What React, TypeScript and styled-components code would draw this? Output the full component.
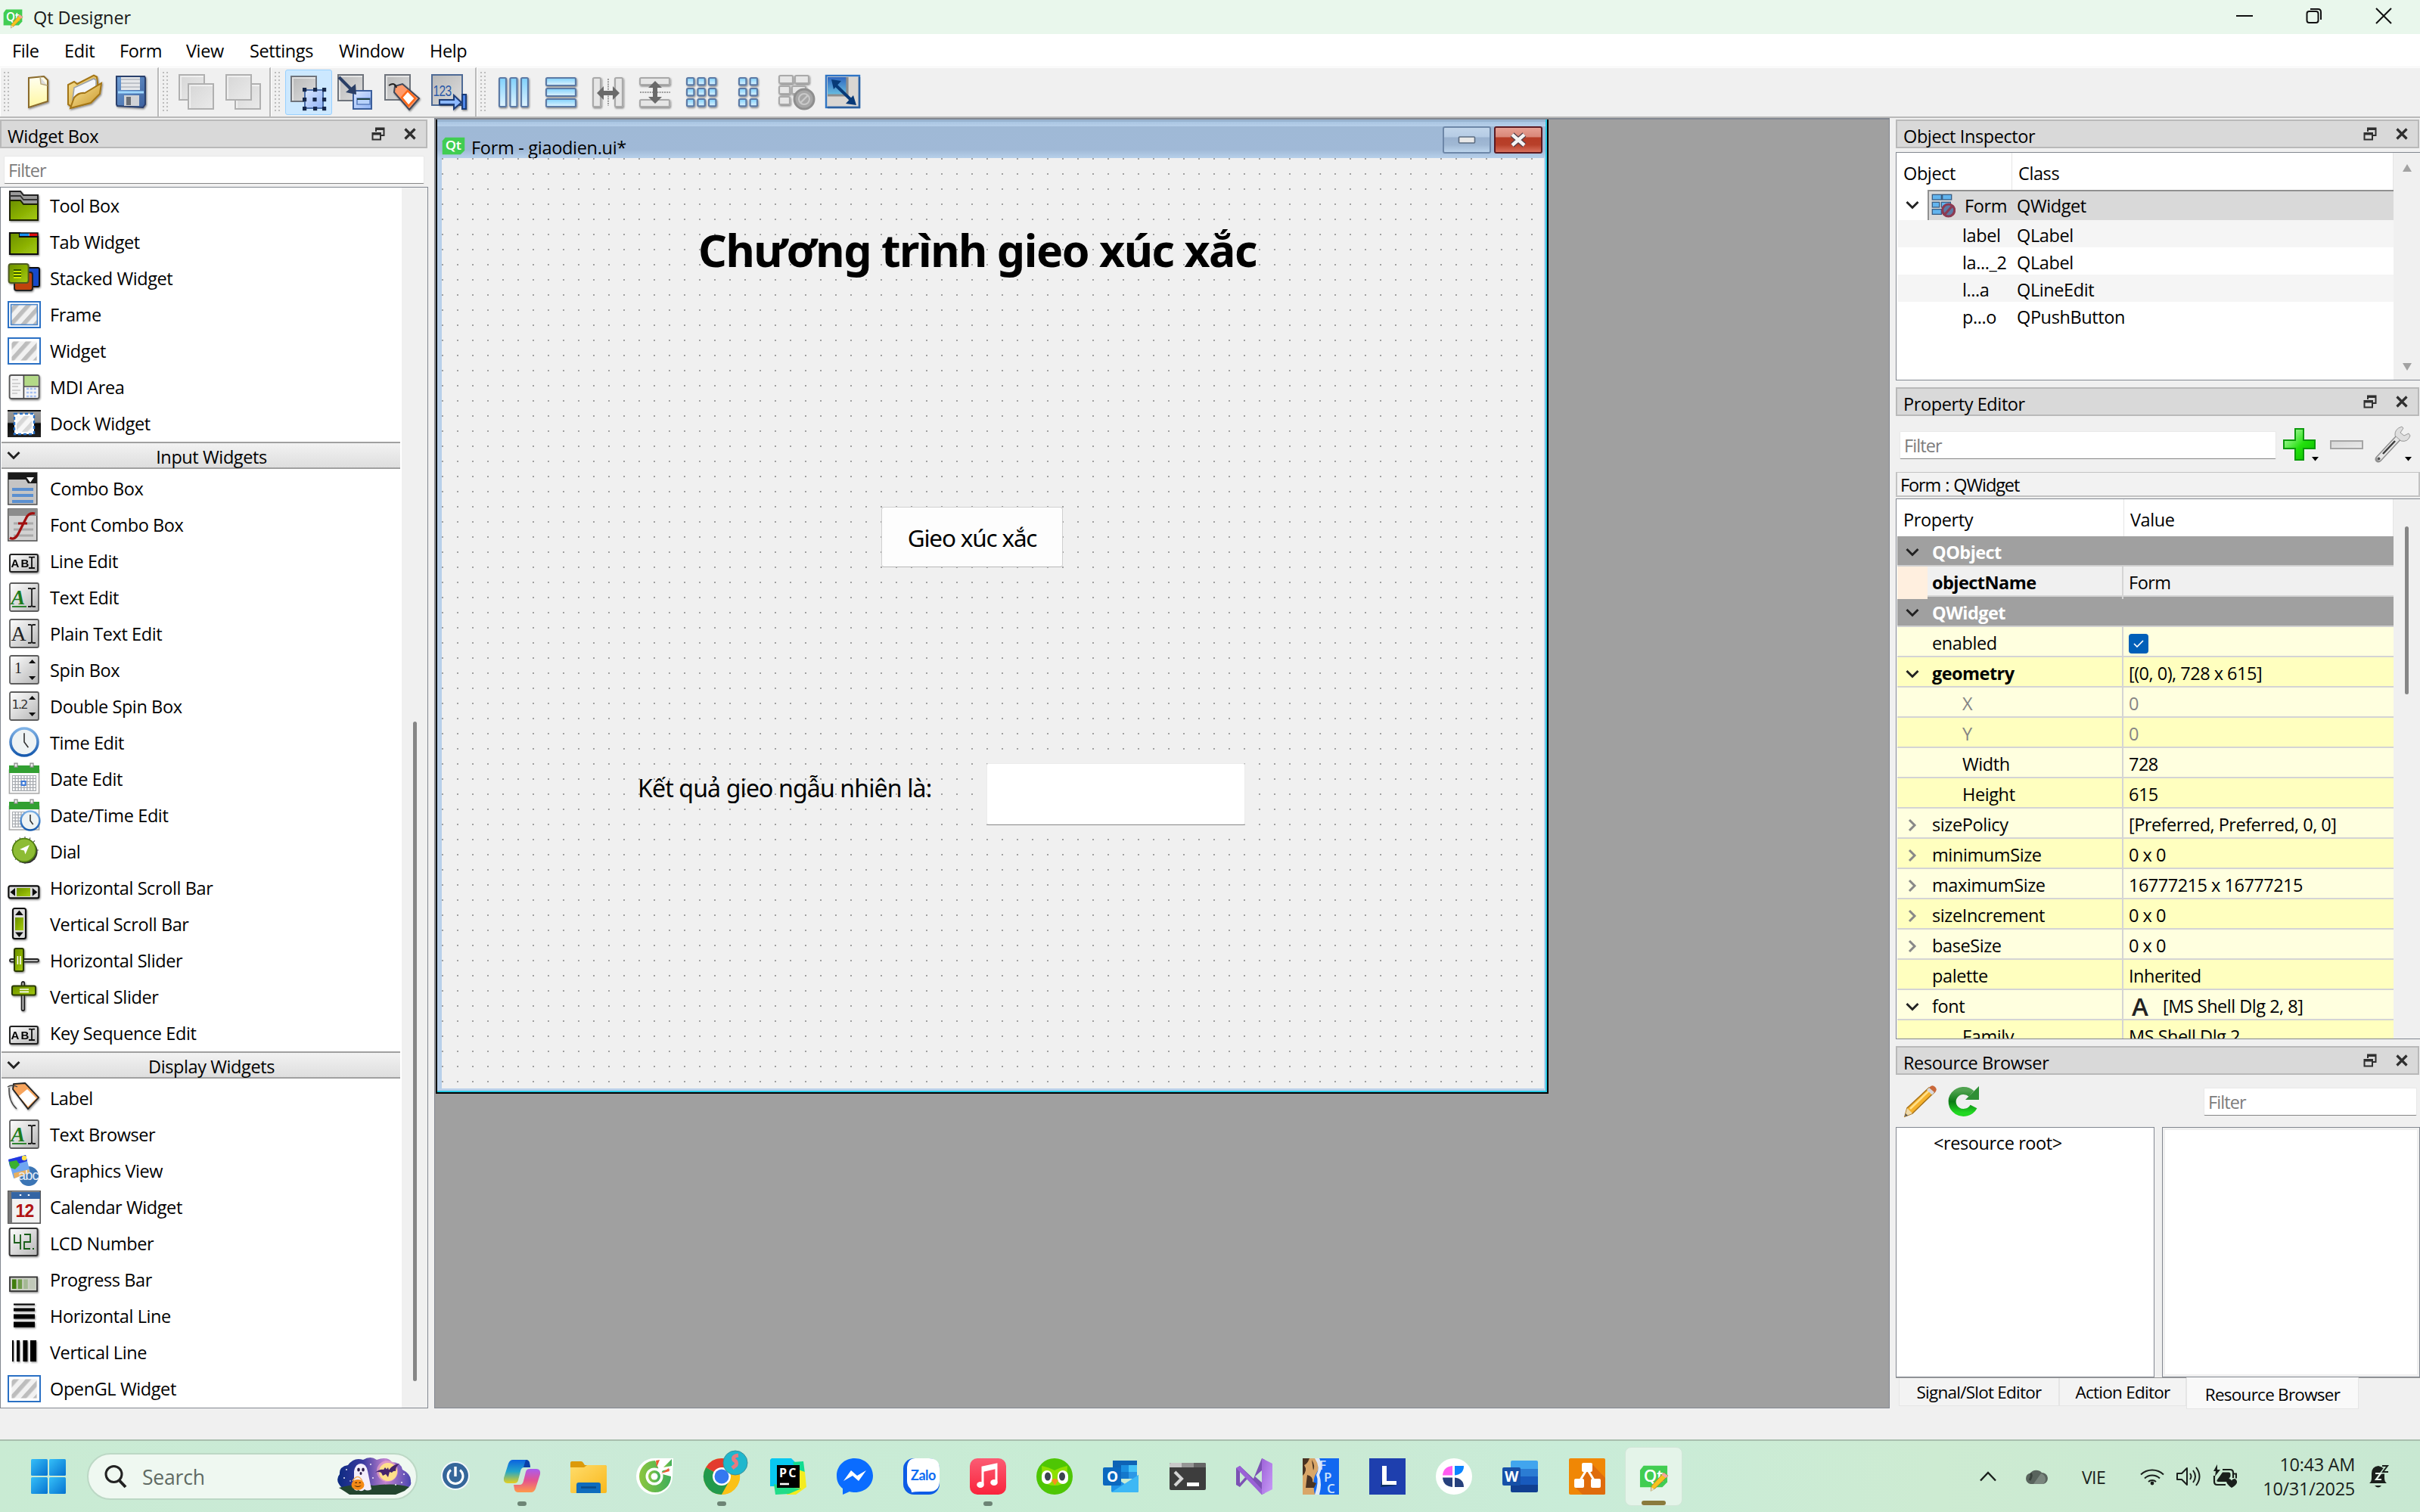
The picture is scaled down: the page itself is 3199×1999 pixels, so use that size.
import React from "react";
import styled, { createGlobalStyle, css } from "styled-components";

const UI = '"Open Sans", "Noto Sans", sans-serif';
const FORM_FONT = '"Noto Sans", "Open Sans", sans-serif';

const GlobalStyle = createGlobalStyle`
  * { box-sizing: border-box; }
  body { margin: 0; background: #f0f0f0; overflow: hidden; }
`;

/* ---------- shell ---------- */

const Desktop = styled.div`
  width: 3199px;
  height: 1999px;
  display: flex;
  flex-direction: column;
  background: #f0f0f0;
  font-family: ${UI};
  font-size: 23.5px;
  letter-spacing: -0.4px;
  line-height: 1;
  color: #000;
  white-space: nowrap;
`;

const TitleBar = styled.header`
  height: 45px;
  flex: none;
  display: flex;
  align-items: center;
  padding: 0 2px 0 4px;
  background: #e9f7ec;
`;

const AppTitle = styled.span`
  flex: 1;
  padding-left: 14px;
  line-height: 46px;
  letter-spacing: -0.1px;
  color: #191919;
`;

const CaptionButton = styled.span`
  width: 92px;
  height: 45px;
  padding-bottom: 3px;
  display: flex;
  align-items: center;
  justify-content: center;
`;

const MenuBar = styled.nav`
  height: 44px;
  flex: none;
  display: flex;
  gap: 35px;
  padding: 1px 0 0 16px;
  line-height: 43px;
  background: #fff;
  border-bottom: 1px solid #f5f5f5;
`;

const MenuItem = styled.span<{ $w: number }>`
  width: ${(p) => p.$w}px;
`;

const ToolbarRow = styled.div`
  height: 67px;
  flex: none;
  display: flex;
  border-bottom: 2px solid #b9b9b9;
`;

const ToolGroup = styled.div<{ $last?: boolean }>`
  display: flex;
  align-items: center;
  padding-right: 3px;
  border-top: 1px solid #fff;
  border-left: 1px solid #fff;
  ${(p) => (p.$last ? "flex: 1;" : "border-right: 2px solid #b9b9b9;")}
`;

const Grip = styled.span`
  width: 8px;
  height: 54px;
  margin: 0 6px 0 4px;
  background-image: linear-gradient(to right, transparent 2px, #f0f0f0 2px),
    linear-gradient(to bottom, #bdbdbd 2px, #f0f0f0 2px);
  background-size: 5px 5px;
`;

const ToolButton = styled.span<{ $active?: boolean }>`
  width: 62px;
  height: 60px;
  display: flex;
  align-items: center;
  justify-content: center;
  border-radius: 3px;
  ${(p) =>
    p.$active &&
    css`
      background: #cce8ff;
      border: 1px solid #99d1ff;
    `}
`;

const Workspace = styled.main`
  flex: 1;
  min-height: 0;
  display: flex;
  padding-top: 2px;
  padding-bottom: 41px;
`;

/* ---------- docks ---------- */

const LeftDock = styled.section`
  width: 566px;
  flex: none;
  display: flex;
  flex-direction: column;
`;

const RightDock = styled.section`
  width: 693px;
  flex: none;
  margin-left: 8px;
  display: flex;
  flex-direction: column;
`;

const DockTitle = styled.div<{ $mt?: number }>`
  height: 38px;
  flex: none;
  margin-top: ${(p) => p.$mt ?? 0}px;
  margin-right: 1px;
  display: flex;
  align-items: center;
  padding: 6px 13px 0 8px;
  background: #d9d9d9;
  border: 2px solid #b9b9b9;
`;

const DockName = styled.span`
  flex: 1;
  line-height: 34px;
`;

const DockButtons = styled.span`
  display: flex;
  align-items: center;
  gap: 25px;
  margin-top: -6px;
`;

const FilterField = styled.div<{ $w: number }>`
  width: ${(p) => p.$w}px;
  height: 37px;
  flex: none;
  padding: 0 5px;
  line-height: 36px;
  letter-spacing: -0.9px;
  color: #7d7d7d;
  background: #fff;
  border: 1px solid #e8e8e8;
  border-bottom: 1px solid #868686;
  border-radius: 2px;
`;

const LeftFilterWrap = styled.div`
  padding: 10px 0 4px 5px;
`;

const WidgetFrame = styled.div`
  flex: 1;
  min-height: 0;
  display: flex;
  border: 1px solid #828790;
  background: #fff;
  overflow: hidden;
`;

const WidgetList = styled.div`
  width: 530px;
  flex: none;
`;

const WidgetRow = styled.div`
  height: 48px;
  display: flex;
  align-items: center;
  gap: 12px;
  padding-left: 9px;
`;

const WidgetName = styled.span`
  line-height: 40px;
`;

const Category = styled.div`
  height: 36px;
  margin: 0 2px 2px 1px;
  display: flex;
  align-items: center;
  padding: 0 22px 0 7px;
  border-top: 2px solid #a0a0a0;
  border-bottom: 2px solid #a0a0a0;
  background: linear-gradient(#f2f2f2, #dedede);
`;

const CategoryName = styled.span`
  flex: 1;
  text-align: center;
  padding: 5px 0 0 25px;
`;

const ScrollTrack = styled.div`
  flex: 1;
  display: flex;
  flex-direction: column;
  align-items: center;
  background: #f0f0f0;
`;

const Thumb = styled.div<{ $top: number; $h: number }>`
  width: 5px;
  height: ${(p) => p.$h}px;
  margin-top: ${(p) => p.$top}px;
  border-radius: 3px;
  background: #868686;
`;

/* ---------- MDI area ---------- */

const MdiArea = styled.section`
  width: 1924px;
  height: 1706px;
  margin: -2px 0 0 8px;
  flex: none;
  border: 1px solid #828790;
  border-top: 2px solid #828790;
  background: #a0a0a0;
`;

const FormWindow = styled.div`
  width: 1471px;
  height: 1288px;
  margin-left: 1px;
  display: flex;
  flex-direction: column;
  background: #b8d0ea;
  border: 1px solid #000;
  border-width: 0 2px 2px 2px;
`;

const FormInner = styled.div`
  flex: 1;
  display: flex;
  flex-direction: column;
  border: 0 solid #27c8e3;
  border-width: 0 2px 2px 0;
`;

const FormTitle = styled.div`
  height: 51px;
  flex: none;
  display: flex;
  align-items: flex-start;
  padding: 0 4px 0 6px;
  background: linear-gradient(#99b4d1 0, #99b4d1 3px, #a9c5e2 3px, #b7cfe9 9px, #9fb9d6 9px, #a0b9d7 40px, #b7d0ea 51px);
`;

const FormCaption = styled.span`
  flex: 1;
  padding: 18px 0 0 8px;
  line-height: 38px;
  letter-spacing: -0.3px;
`;

const GlyphSlot = styled.span`
  margin-top: 23px;
  display: flex;
`;

const WinButton = styled.span<{ $close?: boolean }>`
  width: 64px;
  height: 36px;
  margin: 9px 0 0 4px;
  display: flex;
  align-items: center;
  justify-content: center;
  border-radius: 3px;
  ${(p) =>
    p.$close
      ? css`
          border: 2px solid #5b1a22;
          background: linear-gradient(#e6a094, #d98677 38%, #b63c26 40%, #b8402a 70%, #d8705c);
        `
      : css`
          border: 2px solid #6d87a8;
          background: linear-gradient(#c1d5ea, #b5cbe4 38%, #9ab2cf 40%, #a0b8d4 70%, #bcd4ec);
        `}
`;

const FormCanvas = styled.div`
  position: relative;
  width: 1457px;
  height: 1230px;
  margin-left: 6px;
  background-color: #f0f0f0;
  background-image: linear-gradient(to right, transparent 2px, #f0f0f0 2px),
    linear-gradient(to bottom, #a0a0a0 2px, #f0f0f0 2px);
  background-size: 20px 20px;
  font-family: ${FORM_FONT};
`;

const Placed = styled.div<{ $x: number; $y: number; $w: number; $h: number }>`
  position: absolute;
  left: ${(p) => p.$x}px;
  top: ${(p) => p.$y}px;
  width: ${(p) => p.$w}px;
  height: ${(p) => p.$h}px;
`;

const Heading = styled(Placed)`
  font-size: 59px;
  font-weight: 700;
  line-height: 120px;
  letter-spacing: -1.45px;
`;

const FormLabel = styled(Placed)`
  font-size: 32px;
  line-height: 60px;
  letter-spacing: -0.85px;
`;

const PushButton = styled(Placed)`
  font-size: 31.5px;
  line-height: 80px;
  letter-spacing: -1.2px;
  text-align: center;
  background: #fdfdfd;
  border: 1px solid #d0d0d0;
  border-bottom-color: #b8b8b8;
  border-radius: 4px;
`;

const LineEdit = styled(Placed)`
  background: #fff;
  border: 1px solid #ececec;
  border-bottom: 1px solid #868686;
  border-radius: 3px;
`;

/* ---------- trees ---------- */

const TreeFrame = styled.div<{ $h: number; $mt: number }>`
  height: ${(p) => p.$h}px;
  flex: none;
  margin-top: ${(p) => p.$mt}px;
  display: flex;
  background: #fff;
  border: 1px solid #828790;
  border-right: 0;
  overflow: hidden;
`;

const TreeBody = styled.div`
  width: 657px;
  flex: none;
`;

const TreeHeader = styled.div<{ $h: number; $pt: number }>`
  height: ${(p) => p.$h}px;
  display: flex;
  line-height: ${(p) => p.$h - p.$pt}px;
  border-right: 1px solid #e5e5e5;
`;

const HeaderCell = styled.span<{ $w?: number; $pt: number }>`
  ${(p) => (p.$w ? `width: ${p.$w}px; border-right: 1px solid #e5e5e5; padding-left: 9px;` : "flex: 1; padding-left: 8px;")}
  padding-top: ${(p) => p.$pt}px;
`;

const ObjectRow = styled.div<{ $alt?: boolean; $root?: boolean }>`
  height: ${(p) => (p.$root ? 40 : 36)}px;
  display: grid;
  grid-template-columns: 40px 118px 1fr;
  align-items: stretch;
  margin-left: 1px;
  line-height: ${(p) => (p.$root ? 42 : 40)}px;
  background: ${(p) => (p.$alt ? "#f5f5f5" : "#fff")};
`;

const ExpandCell = styled.span`
  display: flex;
  align-items: center;
  justify-content: center;
`;

const ObjectName = styled.span<{ $root?: boolean }>`
  display: flex;
  align-items: center;
  gap: 12px;
  padding-left: ${(p) => (p.$root ? 3 : 46)}px;
  ${(p) => p.$root && "background: #d9d9d9; border: 2px solid #909090; border-width: 2px 0 0 2px; line-height: 38px;"}
`;

const ClassName = styled.span<{ $root?: boolean }>`
  ${(p) => p.$root && "background: #d9d9d9; border-top: 2px solid #909090; line-height: 38px;"}
`;

const ArrowTrack = styled(ScrollTrack)`
  justify-content: space-between;
  padding: 15px 0 12px;
`;

const PropTools = styled.div`
  height: 74px;
  flex: none;
  display: flex;
  align-items: center;
  padding: 2px 0 0 5px;
`;

const PropTool = styled.span<{ $w: number }>`
  width: ${(p) => p.$w}px;
  display: flex;
  justify-content: center;
`;

const ClassBox = styled.div`
  height: 33px;
  flex: none;
  padding: 1px 0 0 4px;
  line-height: 30px;
  letter-spacing: -1.1px;
  word-spacing: 1px;
  background: #f2f2f2;
  border: 2px solid #c3c3c3;
  border-top-width: 1px;
`;

const GroupRow = styled.div`
  height: 40px;
  display: grid;
  grid-template-columns: 40px 1fr;
  margin-left: 1px;
  line-height: 42px;
  font-weight: 700;
  letter-spacing: -0.55px;
  color: #fff;
  background: #a0a0a0;
  border-bottom: 2px solid #cfcfcf;
`;

const GroupName = styled.span`
  padding: 0 0 0 6px;
`;

type Tone = "light" | "deep" | "plain";
const toneColor: Record<Tone, string> = { light: "#ffffdf", deep: "#ffffbf", plain: "#f0f0f0" };

const PropRow = styled.div<{ $tone: Tone; $dim?: boolean }>`
  height: 40px;
  display: grid;
  grid-template-columns: 40px 259px 1fr;
  margin-left: 1px;
  line-height: 43px;
  color: ${(p) => (p.$dim ? "#858585" : "#000")};
  background: ${(p) => toneColor[p.$tone]};
  border-bottom: 2px solid #d4d4d4;
`;

const PropName = styled.span<{ $nested?: boolean; $bold?: boolean }>`
  padding-left: ${(p) => (p.$nested ? 46 : 6)}px;
  border-right: 2px solid #d4d4d4;
  ${(p) => p.$bold && "font-weight: 700; letter-spacing: -0.55px;"}
`;

const PropValue = styled.span`
  display: flex;
  align-items: center;
  padding-left: 7px;
  letter-spacing: -0.5px;
`;

const PropExpand = styled(ExpandCell)<{ $peach?: boolean }>`
  background: ${(p) => (p.$peach ? "#ffefdf" : "transparent")};
`;

const CheckBox = styled.span`
  width: 26px;
  height: 26px;
  display: flex;
  align-items: center;
  justify-content: center;
  border-radius: 4px;
  background: #005fb8;
`;

const FontGlyph = styled.span`
  width: 45px;
  padding-left: 4px;
  font-family: "Open Sans", sans-serif;
  font-weight: 600;
  font-size: 33px;
  line-height: 36px;
  color: #222;
`;

/* ---------- resource browser ---------- */

const ResourceTools = styled.div`
  height: 69px;
  flex: none;
  display: flex;
  align-items: center;
  justify-content: space-between;
  padding: 5px 4px 4px 10px;
`;

const ToolPair = styled.span`
  display: flex;
  gap: 14px;
`;

const ResourcePanes = styled.div`
  height: 332px;
  flex: none;
  display: flex;
  gap: 10px;
  border-bottom: 1px solid #9a9a9a;
`;

const ResourcePane = styled.div<{ $w?: number }>`
  ${(p) => (p.$w ? `width: ${p.$w}px;` : "flex: 1; box-shadow: inset 0 0 0 3px #f0f0f0;")}
  padding: 1px 0 0 49px;
  line-height: 38px;
  background: #fff;
  border: 1px solid #828790;
`;

const TabStrip = styled.div`
  display: flex;
  align-items: flex-start;
  padding-left: 4px;
  font-size: 22.5px;
  letter-spacing: -0.75px;
`;

const DockTab = styled.span<{ $w: number; $on?: boolean }>`
  width: ${(p) => p.$w}px;
  height: ${(p) => (p.$on ? 42 : 37)}px;
  margin-top: ${(p) => (p.$on ? -1 : 0)}px;
  line-height: ${(p) => (p.$on ? 46 : 38)}px;
  text-align: center;
  background: ${(p) => (p.$on ? "#f9f9f9" : "#f3f3f3")};
  border: 1px solid #e5e5e5;
  border-top: 0;
`;

/* ---------- taskbar ---------- */

const Taskbar = styled.footer`
  height: 96px;
  flex: none;
  display: flex;
  align-items: center;
  padding-left: 41px;
  border-top: 2px solid #a9bfae;
  background: linear-gradient(90deg, #c9ebd3, #cbead8 20%, #c8ecd4 45%, #caead4 55%, #c9ecd8 65%, #cdebd2 80%, #c8e8d2);
`;

const SearchPill = styled.div`
  width: 437px;
  height: 62px;
  margin-left: 28px;
  display: flex;
  align-items: center;
  padding: 0 6px 0 21px;
  border: 2px solid #bcd8c5;
  border-radius: 31px;
  background: #eff8f1;
`;

const SearchText = styled.span`
  flex: 1;
  padding: 1px 0 0 20px;
  font-size: 26.5px;
  letter-spacing: -0.2px;
  line-height: 60px;
  color: #5f6a63;
`;

const Pinned = styled.div`
  display: flex;
  margin-left: 6px;
`;

const TaskSlot = styled.div`
  width: 88px;
  height: 94px;
  display: flex;
  align-items: center;
  justify-content: center;
`;

const TaskTile = styled.div<{ $active?: boolean }>`
  position: relative;
  width: 76px;
  height: 78px;
  display: flex;
  align-items: center;
  justify-content: center;
  border-radius: 8px;
  ${(p) => p.$active && "background: #e4f4e9; border: 1px solid #d2e6d8;"}
`;

const RunMark = styled.span<{ $wide?: boolean }>`
  position: absolute;
  bottom: 0;
  left: 50%;
  width: ${(p) => (p.$wide ? 32 : 12)}px;
  height: 6px;
  transform: translateX(-50%);
  border-radius: 3px;
  background: ${(p) => (p.$wide ? "#8a7b3c" : "#6d8475")};
`;

const Tray = styled.div`
  flex: 1;
  display: flex;
  align-items: center;
  justify-content: flex-end;
  padding-right: 41px;
  color: #1a1f1c;
`;

const TrayItem = styled.span<{ $ml: number }>`
  display: flex;
  margin-left: ${(p) => p.$ml}px;
`;

const Language = styled.span`
  width: 33px;
  margin: 3px 0 0 44px;
  font-size: 23px;
  letter-spacing: -0.6px;
`;

const Clock = styled.div`
  width: 150px;
  margin-left: 6px;
  text-align: right;
  line-height: 32px;
  letter-spacing: -0.3px;
`;

/* ---------- small glyphs ---------- */

const Chevron = ({ open, color = "#222" }: { open?: boolean; color?: string }) => (
  <svg width="18" height="18" viewBox="0 0 18 18" fill="none" stroke={color} strokeWidth="3">
    <path d={open ? "M1.5 5 9 12.500l7.500-7.500" : "M5 2l7 7-7 7"} />
  </svg>
);

const FloatGlyph = () => (
  <svg width="18" height="18" viewBox="0 0 18 18" fill="none" stroke="#2f2f2f" strokeWidth="2">
    <path d="M6 6V1.500h10.500V11H13M5 3h12" />
    <path d="M1.500 8h10.500v8.500H1.500zM1 9.500h11" />
  </svg>
);

const CloseGlyph = () => (
  <svg width="16" height="16" viewBox="0 0 16 16" fill="none" stroke="#2f2f2f" strokeWidth="3.200">
    <path d="M1.500 1.500l13 13M14.500 1.500l-13 13" />
  </svg>
);

const Dock = ({ name, mt }: { name: string; mt?: number }) => (
  <DockTitle $mt={mt}>
    <DockName>{name}</DockName>
    <DockButtons>
      <FloatGlyph />
      <CloseGlyph />
    </DockButtons>
  </DockTitle>
);

const GradientSheet = styled.svg`
  position: absolute;
`;

const Defs = () => (
  <GradientSheet width="0" height="0">
    <defs>
      <linearGradient id="green" x1="0" y1="0" x2="1" y2="1"><stop offset="0" stopColor="#6a8f00" /><stop offset="1" stopColor="#a6cc0a" /></linearGradient>
      <linearGradient id="metal" x1="0" y1="0" x2="1" y2="1"><stop offset="0" stopColor="#fff" /><stop offset="1" stopColor="#b5b5b5" /></linearGradient>
      <linearGradient id="grey" x1="0" y1="0" x2="1" y2="1"><stop offset="0" stopColor="#b8b8b8" /><stop offset="1" stopColor="#dedede" /></linearGradient>
      <linearGradient id="pale" x1="0" y1="0" x2="1" y2="1"><stop offset="0" stopColor="#d6d6d6" /><stop offset="1" stopColor="#eaeaea" /></linearGradient>
      <linearGradient id="sky" x1="0" y1="0" x2="0" y2="1"><stop offset="0" stopColor="#7fd0fb" /><stop offset="1" stopColor="#e0f4ff" /></linearGradient>
      <linearGradient id="blueSq" x1="0" y1="0" x2="1" y2="1"><stop offset="0" stopColor="#dbe8ff" /><stop offset="1" stopColor="#8fb2f5" /></linearGradient>
      <linearGradient id="page" x1="0" y1="0" x2="0" y2="1"><stop offset="0" stopColor="#fffff2" /><stop offset="1" stopColor="#fff7a0" /></linearGradient>
      <linearGradient id="gold" x1="0" y1="0" x2="1" y2="1"><stop offset="0" stopColor="#fbe69a" /><stop offset="1" stopColor="#c8962a" /></linearGradient>
      <linearGradient id="floppy" x1="0" y1="0" x2="1" y2="1"><stop offset="0" stopColor="#6f9fd6" /><stop offset="1" stopColor="#3b5f9c" /></linearGradient>
      <linearGradient id="pipe" x1="0" y1="0" x2="0" y2="1"><stop offset="0" stopColor="#9a9a9a" /><stop offset=".45" stopColor="#888" /><stop offset=".5" stopColor="#0a0a0a" /><stop offset="1" stopColor="#222" /></linearGradient>
      <linearGradient id="win" x1="0" y1="0" x2="1" y2="1"><stop offset="0" stopColor="#35bff8" /><stop offset="1" stopColor="#0572d0" /></linearGradient>
      <linearGradient id="night" x1="0" y1="0" x2="1" y2="0"><stop offset="0" stopColor="#0b2a80" /><stop offset=".35" stopColor="#3b3aa0" /><stop offset=".65" stopColor="#c183d0" /><stop offset="1" stopColor="#4a45b0" /></linearGradient>
      <linearGradient id="coA" x1="0" y1="0" x2="0" y2="1"><stop offset="0" stopColor="#0b62e0" /><stop offset=".5" stopColor="#23a6c9" /><stop offset="1" stopColor="#e8cf1b" /></linearGradient>
      <linearGradient id="coB" x1="0" y1="0" x2="0" y2="1"><stop offset="0" stopColor="#a95cf0" /><stop offset=".5" stopColor="#e5538f" /><stop offset="1" stopColor="#ff9a4a" /></linearGradient>
      <linearGradient id="music" x1="0" y1="0" x2="0" y2="1"><stop offset="0" stopColor="#fb5c74" /><stop offset="1" stopColor="#fa233b" /></linearGradient>
      <linearGradient id="folder" x1="0" y1="0" x2="1" y2="1"><stop offset="0" stopColor="#ffdc6b" /><stop offset="1" stopColor="#f9b81c" /></linearGradient>
      <linearGradient id="vs" x1="0" y1="0" x2="1" y2="1"><stop offset="0" stopColor="#9d63d8" /><stop offset="1" stopColor="#c99cf8" /></linearGradient>
      <linearGradient id="refresh" x1="0" y1="0" x2="0" y2="1"><stop offset="0" stopColor="#4fa24f" /><stop offset=".5" stopColor="#0b7a14" /><stop offset="1" stopColor="#22d822" /></linearGradient>
      <linearGradient id="plus" x1="0" y1="0" x2="1" y2="1"><stop offset="0" stopColor="#d6ffd0" /><stop offset=".55" stopColor="#22e00c" /><stop offset="1" stopColor="#0ab400" /></linearGradient>
      <linearGradient id="clock" x1="0" y1="0" x2="0" y2="1"><stop offset="0" stopColor="#7fb2e6" /><stop offset="1" stopColor="#1659ad" /></linearGradient>
      <linearGradient id="coc" x1="0" y1="0" x2="1" y2="0"><stop offset="0" stopColor="#8cc63f" /><stop offset="1" stopColor="#3fae5a" /></linearGradient>
      <linearGradient id="adj" x1="0" y1="0" x2="0" y2="1"><stop offset="0" stopColor="#2f67c0" /><stop offset="1" stopColor="#69bfe0" /></linearGradient>
      <pattern id="stripes" width="6" height="6" patternUnits="userSpaceOnUse" patternTransform="rotate(42)"><rect width="6" height="6" fill="#f1f1f1" /><rect width="2.800" height="6" fill="#bdbdbd" /></pattern>
      <filter id="soft" x="-20%" y="-20%" width="150%" height="150%"><feDropShadow dx=".5" dy=".7" stdDeviation=".5" floodOpacity=".45" /></filter>
    </defs>
  </GradientSheet>
);

/* ---------- toolbar icons, 24 unit grid ---------- */

const Pane = ({ x, y, w = 17, h = 17, light }: { x: number; y: number; w?: number; h?: number; light?: boolean }) => (
  <g>
    <rect x={x + 0.5} y={y + 0.5} width={w} height={h} fill={light ? "url(#pale)" : "url(#grey)"} stroke={light ? "#b0b0b0" : "#6f747c"} />
    <path d={`M${x + 1.500} ${y + h}V${y + 1.500}H${x + w}`} fill="none" stroke="#fff" strokeOpacity=".55" />
  </g>
);

const Bars = ({ rects, off }: { rects: number[][]; off?: boolean }) => (
  <g filter="url(#soft)">
    {rects.map(([x, y, w, h], i) => (
      <rect key={i} x={x} y={y} width={w} height={h} rx=".8" fill={off ? "#e6e6e6" : "url(#sky)"} stroke={off ? "#a9a9a9" : "#5b7aa5"} strokeWidth="1.100" />
    ))}
  </g>
);

const cells = (cols: number[], rows: number[], s: number) => rows.flatMap((y) => cols.map((x) => [x, y, s, s]));

const toolArt: Record<string, React.ReactNode> = {
  new: (
    <g filter="url(#soft)"><path d="M6 2.500 16 1.500l2.500 2.500v14L6 22z" fill="url(#page)" stroke="#8a6a2c" /><path d="M13.500 1.800 14 6.500l4.300 1" fill="#ddd" stroke="#b9a97c" strokeWidth=".7" /></g>
  ),
  open: (
    <g filter="url(#soft)"><path d="M1 20V7l4-2 2 1.500L18 .8l2 1 1 8L4 22z" fill="url(#gold)" stroke="#a37414" /><path d="M4 17 5 9 18 3l1.500 1v5z" fill="#f4f6fa" stroke="#9aa2ad" strokeWidth=".8" /><path d="M2.500 22.500 5 15.500Q8 12 12 12.500L23 6l-1 7-6 6z" fill="url(#gold)" stroke="#a37414" /></g>
  ),
  save: (
    <g filter="url(#soft)"><path d="M2 1.500h18.500l.5 1V20l-1.500 2L2.500 21 2 20z" fill="url(#floppy)" stroke="#2c3f6c" /><path d="M5 2h12.500v8.500H5z" fill="#e5e7ea" /><path d="M5 3.500h12.500M5 6h12.500M5 8.500h12.500" stroke="#bfc3ca" /><path d="M3 12h17" stroke="#9fd8ff" strokeWidth="1.600" /><path d="M7 14h10v7H7z" fill="#d0d2d6" /><path d="M8.500 15h3v5.500h-3z" fill="#6b6e75" /></g>
  ),
  back: (<g><Pane x={0} y={0} w={16.500} h={16.500} light /><Pane x={6} y={6} w={16.500} h={16.500} light /></g>),
  front: (<g><Pane x={6} y={6} w={16.500} h={16.500} light /><Pane x={0} y={0} w={16.500} h={16.500} light /></g>),
  widgets: (
    <g><Pane x={0} y={1} w={16.500} h={16.500} /><rect x="9.500" y="10.500" width="12" height="12" fill="url(#blueSq)" stroke="#4c6ea8" />
      {[[8, 9], [15, 9], [21, 9], [8, 15.500], [14.700, 15.500], [21, 15.500], [8, 21.500], [15, 21.500], [21, 21.500]].map(([x, y], i) => <rect key={i} x={x} y={y} width="2.600" height="2.600" fill="#16284a" />)}
    </g>
  ),
  signals: (
    <g><Pane x={0} y={0} w={16.500} h={17} /><rect x="10.500" y="11" width="12" height="12" fill="url(#blueSq)" stroke="#3c5f9c" /><path d="M13 16h8.500v4H13z" fill="#b8d2fb" stroke="#5b7fc0" strokeWidth=".8" /><path d="M13 16.500h8.500" stroke="#244" strokeWidth="1" /><path d="M1 2l9 9" stroke="#2a3f66" strokeWidth="2" /><path d="M12.500 13.500 12 6.500 5.500 12z" fill="#2a3f66" /></g>
  ),
  buddies: (
    <g><Pane x={0} y={0} w={16.500} h={16.500} /><g filter="url(#soft)"><path d="M7 8l5-1.500L23 16l-6.500 7.500L6.500 12z" fill="#ff9a6b" stroke="#3f4658" /><path d="M15.500 11 20.500 16 16 21l-4.500-5.500z" fill="#fff" stroke="#ff6a1c" strokeWidth="1.300" /></g><path d="M3 7.500Q7 5 8 9" fill="none" stroke="#222" /></g>
  ),
  order: (
    <g><rect x=".5" y=".5" width="20" height="20" fill="url(#grey)" stroke="#4e6a95" /><text x="1.300" y="14.500" fontSize="10" fill="#2c5aa8" fontFamily="Liberation Sans" textLength="12" lengthAdjust="spacingAndGlyphs">123</text><g filter="url(#soft)"><path d="M5.500 17h9.500v-3l5 4.700-5 4.300v-3H5.500z" fill="#8cb8ff" stroke="#1f3c78" /><rect x="20.500" y="13.500" width="2.500" height="9.500" fill="#4f86e8" stroke="#1f3c78" /></g></g>
  ),
  horiz: <Bars rects={[[2, 2.500, 4.500, 19], [9.200, 2.500, 4.500, 19], [16.500, 2.500, 4.500, 19]]} />,
  vert: <Bars rects={[[2, 2.500, 19.500, 5], [2, 9.500, 19.500, 5], [2, 16.500, 19.500, 5]]} />,
  hsplit: (
    <g><Bars off rects={[[2, 2.500, 5, 19], [16.500, 2.500, 5, 19]]} /><path d="M12 3v18" stroke="#9a9a9a" strokeDasharray="1 .6" /><path d="M4.500 12.500 9 8v3h6V8l4.500 4.500L15 17v-3H9v3z" fill="#6a6a6a" /></g>
  ),
  vsplit: (
    <g><Bars off rects={[[2, 2.500, 19.500, 4.500], [2, 17, 19.500, 4.500]]} /><path d="M2 12h20" stroke="#9a9a9a" strokeDasharray="1 .6" /><path d="M12 4.500 16.500 9h-3v6h3L12 19.500 7.500 15h3V9h-3z" fill="#6a6a6a" /></g>
  ),
  grid: <Bars rects={cells([2, 9.200, 16.500], [2.500, 9.500, 16.500], 4.700)} />,
  form: <Bars rects={cells([5.500, 12.800], [2.500, 9.500, 16.500], 4.700)} />,
  broken: (
    <g><Bars off rects={[[1, 1, 9, 5], [11.500, 1, 9, 5], [1, 8, 7, 5], [9.500, 8, 9, 5], [1, 15, 7, 5]]} /><circle cx="17.500" cy="16.500" r="6.500" fill="#a6a6a6" stroke="#8e8e8e" strokeWidth="1.500" /><circle cx="17.500" cy="16.500" r="3.500" fill="none" stroke="#c9c9c9" /><path d="M15 19l5-5" stroke="#c9c9c9" strokeWidth="1.200" /></g>
  ),
  adjust: (
    <g><rect x="1" y="1" width="22" height="21" fill="#d9d6d2" stroke="#2f74c4" strokeWidth="1.200" /><path d="M2 2h13v12H2z" fill="url(#adj)" /><path d="M15 2v12H2" fill="none" stroke="#8d8d8d" strokeWidth="1.600" /><path d="M23 2v20H2" fill="none" stroke="#2a5f9f" strokeWidth="1.200" /><path d="M6.500 6.500l12 11.500" stroke="#083a78" strokeWidth="2" /><path d="M4.500 3.500l6.500 1-5 5.500zM21 20.500l-7-1 5-5.500z" fill="#083a78" /></g>
  ),
};

const ToolIcon = ({ name }: { name: string }) => (
  <svg width="48" height="48" viewBox="0 0 24 24" overflow="visible">{toolArt[name]}</svg>
);

/* ---------- widget box icons, 22 unit grid ---------- */

const serif = "Liberation Serif";
const Key = ({ children }: { children?: React.ReactNode }) => (
  <g><rect x="1.500" y="1.500" width="19" height="18.500" rx="1" fill="url(#metal)" stroke="#5d5d5d" strokeWidth=".9" />{children}</g>
);
const Caret = () => <path d="M13.500 5h1.800l.7.600.7-.600h1.800M16 5.500v11M13.500 17h1.800l.7-.600.7.600h1.800" fill="none" stroke="#222" strokeWidth=".9" />;
const Spins = () => <path d="M14 6.500 16.300 4l2.300 2.500zM14 15l2.300 2.500L18.600 15z" fill="#111" />;
const ClockFace = ({ cx, cy, r }: { cx: number; cy: number; r: number }) => (
  <g><circle cx={cx} cy={cy} r={r} fill="#eef3f4" stroke="url(#clock)" strokeWidth={r * 0.2} /><path d={`M${cx} ${cy - r * 0.65}V${cy}l${r * 0.3} ${r * 0.4}`} fill="none" stroke="#333" strokeWidth=".8" /></g>
);
const Cal = () => (
  <g><path d="M1.200 5h19.600v15.500H1.200z" fill="#fafafa" stroke="#a9a9a9" strokeWidth=".8" /><path d="M1 2h20v5H1z" fill="#32a032" /><rect x="3" y="8.500" width="16" height="10.500" fill="#a7abb0" />
    {[0, 1, 2, 3, 4, 5, 6, 7].map((c) => [0, 1, 2, 3, 4].map((r) => <rect key={`${c}-${r}`} x={3.500 + c * 1.950} y={9 + r * 2} width="1.300" height="1.350" fill="#fff" />))}
    <path d="M4.500.6h2v2.500h-2zM15 .6h2v2.500h-2z" fill="#eee" stroke="#888" strokeWidth=".6" /></g>
);
const Abc = () => (
  <g filter="url(#soft)"><rect x="1.500" y="6.500" width="18.500" height="11.500" rx="1" fill="url(#metal)" stroke="#222" /><text x="2.300" y="14.800" fontSize="7.500" fontFamily="Liberation Sans" fontWeight="700" textLength="11.500">AB</text><path d="M14 8.300h1.400l.6.500.6-.500H18M16 8.800v6.200M14 15.500h1.400l.6-.500.6.500H18" fill="none" stroke="#111" strokeWidth=".9" /></g>
);
const Striped = ({ double }: { double?: boolean }) => (
  <g><rect x=".5" y="2.500" width="21" height="17" fill="#fff" stroke="#2a70c4" /><rect x="2.300" y="4.300" width="17.400" height="13.400" fill="url(#stripes)" stroke={double ? "#4a86cc" : "#fff"} strokeWidth=".8" /></g>
);
const TextKey = ({ green }: { green?: boolean }) => (
  <Key><text x="2.200" y="15.500" fontSize="14" fontFamily={serif} fontStyle={green ? "italic" : "normal"} fontWeight={green ? 700 : 400} fill={green ? "#1c7a1c" : "#222"}>A</text>{green && <path d="M3 17h9.500" stroke="#1c7a1c" strokeWidth=".9" />}<Caret /></Key>
);

const widgetArt: Record<string, React.ReactNode> = {
  toolbox: (<g filter="url(#soft)"><path d="M1.500 20V1.500h7l2 2.500h9.500v16z" fill="#9a9a9a" stroke="#222" /><path d="M1.500 4.500h7l2 2.500H20" fill="none" stroke="#333" strokeWidth=".9" /><path d="M1.500 20.500V7.500h7l2 2.500H20v10.500z" fill="url(#green)" stroke="#1a2400" /></g>),
  tab: (<g filter="url(#soft)"><path d="M1.500 5h6.500v2.500h12v11.500h-18.500z" fill="url(#green)" stroke="#111" strokeWidth="1.100" /><path d="M8 5h6v2H8z" fill="#1490f0" /><path d="M14.500 5H20v2h-5.500z" fill="#e01010" /><path d="M7.500 5H20v2.500" fill="none" stroke="#111" strokeWidth=".7" /></g>),
  stacked: (<g filter="url(#soft)"><rect x="12" y="4" width="9" height="12.500" rx="1" fill="#1848c8" stroke="#111" /><rect x="4.500" y="7" width="12" height="12" rx="1.500" fill="#c0420c" stroke="#222" /><rect x=".8" y="1.500" width="13" height="12.500" rx="1.500" fill="url(#green)" stroke="#4d5a20" /><path d="M4 5.500h5M4 7.500h5M4 9.500h5" stroke="#163c00" strokeWidth=".8" /><path d="M4 6.500h5M4 8.500h5M4 10.500h5" stroke="#e6ff00" strokeWidth=".8" /></g>),
  frame: <Striped double />,
  widget: <Striped />,
  mdi: (<g filter="url(#soft)"><rect x="1.300" y="3" width="19.500" height="15.500" rx="1.200" fill="#f4f4f4" stroke="#555" strokeWidth=".9" /><path d="M11 3.500h9.300V10H11z" fill="#b3d987" /><path d="M10.700 3v15.500M11 10.500h10" stroke="#444" strokeWidth=".8" /><path d="M3 6h4M3 8.500h5.500M3 10.500h4M3 13h5.500M3 15h3.500" stroke="#c5c5c5" strokeWidth=".8" /><path d="M12.500 12h7M12.500 14.500h7M12.500 17h7" stroke="#a6bff0" strokeDasharray="1.600 .8" strokeWidth="1.300" /></g>),
  dock: (<g><rect x="0" y="2" width="22" height="18" fill="url(#pipe)" /><path d="M0 2.500h22" stroke="#111" /><rect x="4.500" y="4.500" width="13" height="13.500" fill="#fff" stroke="#2a70c4" strokeDasharray="2 1.500" strokeWidth="1.200" /><rect x="6" y="6" width="10" height="10.500" fill="url(#stripes)" opacity=".6" /></g>),
  combo: (<g><rect x=".4" y=".5" width="19" height="21" fill="#c4c4c4" stroke="#555" strokeWidth=".8" /><path d="M.5.5h19v7h-6L12 5H.5z" fill="#1a1a1a" /><path d="M12.500 3.500h5L15 7z" fill="#fff" /><path d="M3 11.500h14M3 15.500h14M3 19.500h14" stroke="#5a8fd0" strokeWidth="2" /></g>),
  fontcombo: (<g><rect x=".4" y=".5" width="19" height="21" fill="#d2d2d2" stroke="#555" strokeWidth=".8" /><path d="M.5.5h19V5H.5z" fill="#8c8c8c" /><path d="M4 10h13M4 14h13M4 18h13" stroke="#aaa" strokeWidth="1.600" /><path d="M1.500 19.500Q5 21.500 7.500 16L12 7Q14 2.500 18 3.500M7 10h6" fill="none" stroke="#a01010" strokeWidth="1.600" /></g>),
  line: <Abc />,
  text: <TextKey green />,
  plain: <TextKey />,
  spin: (<Key><text x="4.500" y="13" fontSize="10" fontFamily={serif} fill="#222">1</text><Spins /></Key>),
  dspin: (<Key><text x="2.800" y="12.500" fontSize="8" fontFamily="DejaVu Sans" fill="#333" textLength="10.500">1.2</text><Spins /></Key>),
  time: <ClockFace cx={11} cy={10.500} r={9} />,
  date: (<g><Cal /><rect x="9.300" y="12.500" width="2.500" height="2.500" fill="#fff" stroke="#3a78d8" /></g>),
  datetime: (<g><Cal /><ClockFace cx={15} cy={14.500} r={6.200} /></g>),
  dial: (<g><path d="M11.500 1v18M2.500 10h18M5 3.700l13 12.600M18 3.700 5 16.300M8 1.800l7 16.400M15 1.800 8 18.200" stroke="#555" strokeWidth=".6" /><circle cx="12" cy="11" r="7.800" fill="#333" /><circle cx="11" cy="10" r="7.700" fill="#8dbc34" stroke="#4f7d10" strokeWidth=".8" /><path d="M14.500 6.500 8 9.500l3 .7.700 2.500z" fill="#fff" /></g>),
  hscroll: (<g filter="url(#soft)"><rect x=".7" y="9.700" width="20" height="8" rx="1.200" fill="#ddd" stroke="#111" strokeWidth="1.100" /><path d="M1.700 13.700 5 11v5.400zM19.700 13.700 16.400 11v5.400z" fill="#111" /><path d="M6 11h9v5.500H6z" fill="url(#green)" /></g>),
  vscroll: (<g filter="url(#soft)"><rect x="3.500" y=".5" width="8.500" height="20" rx="1.200" fill="#ddd" stroke="#111" strokeWidth="1.100" /><path d="M7.700 1.800 5 5h5.400zM7.700 19.500 5 16.300h5.400z" fill="#111" /><path d="M5 6.500h5.500v8.500H5z" fill="url(#green)" /></g>),
  hslider: (<g filter="url(#soft)"><rect x="1.500" y="10" width="19" height="1.800" rx=".9" fill="#ccc" stroke="#222" strokeWidth=".9" /><rect x="4.500" y="3" width="6" height="15" rx="1" fill="url(#green)" stroke="#2c3a00" /><path d="M6.700 8v5.500M8.500 8v5.500" stroke="#fff" strokeWidth=".8" /></g>),
  vslider: (<g filter="url(#soft)"><rect x="9.300" y="1" width="1.800" height="19" rx=".9" fill="#ccc" stroke="#222" strokeWidth=".9" /><rect x="3" y="3.800" width="15.500" height="6" rx="1" fill="url(#green)" stroke="#2c3a00" /><path d="M8 6h6M8 7.700h6" stroke="#fff" strokeWidth=".8" /></g>),
  label: (<g filter="url(#soft)"><path d="M3.500 5 4 1.500 11.500 1 20.500 10.500 13.500 18z" fill="#f7a45c" stroke="#222" strokeWidth=".9" /><path d="M13 5 19 11 13.500 16.500 7.500 9.500z" fill="#fff" /><path d="M0 3.500Q3 1.500 6.500 3.500M1 4q-.5 9 5 14" fill="none" stroke="#444" strokeWidth=".7" /></g>),
  graphics: (<g><circle cx="14" cy="14.500" r="6.500" fill="#3b75b5" /><path d="M.5 3.500 12 .5l3 11.500L4 16z" fill="#6fa6f2" /><path d="M.5 3.500 12 .5l1 4L1.500 8z" fill="#2238e0" /><path d="M1 5l5-1 2 3-3 3-3-1z" fill="#3ab030" /><path d="M4 12.500l10-2.500.6 2L4.500 16z" fill="#e8b060" /><circle cx="11" cy="2.500" r="1.600" fill="#ffe34d" /><text x="7" y="17" fontSize="9" fontFamily="Liberation Sans" fill="#e6eef8">abc</text></g>),
  calendar: (<g><rect x=".4" y=".4" width="21.200" height="21.200" fill="#f2f2f2" stroke="#555" strokeWidth=".8" /><path d="M.5.5h2.500v21H.5z" fill="#777" /><path d="M2.500 1h19v4.500h-19z" fill="#3465a4" /><path d="M8.500 2.500v1M14 2.500v1" stroke="#fff" strokeWidth="1.200" /><text x="5.300" y="17.500" fontSize="11.500" fontWeight="700" fontFamily="Liberation Sans" fill="#b01414">12</text></g>),
  lcd: (<g filter="url(#soft)"><rect x="1.300" y="1" width="18.500" height="18" rx="1" fill="url(#metal)" stroke="#333" /><path d="M4.500 5v5.500h4M8.500 5v10M11 5h4v5h-4v4.500h4M16.500 14.500h1" fill="none" stroke="#165c16" strokeWidth=".9" /></g>),
  progress: (<g filter="url(#soft)"><rect x="1.500" y="9.200" width="18" height="9.300" fill="#ccd0c6" stroke="#333" strokeWidth=".9" /><path d="M3 10.700h2.800v6.300H3z" fill="#3f7d0c" /><path d="M6.800 10.700h2.800v6.300H6.800z" fill="#6f9c4c" /><path d="M10.600 10.700h2.800v6.300h-2.800z" fill="#a4b894" /><path d="M14.400 10.700h3.800v6.300h-3.800z" fill="#c0c8b8" /></g>),
  hline: (<g filter="url(#soft)" fill="#000"><path d="M4 2.700h14v1H4zM4 5.800h14v2H4zM4 9.800h14v3H4zM4 14.800h14v3.600H4z" /></g>),
  vline: (<g filter="url(#soft)" fill="#000"><path d="M3 3h1v14H3zM6 3h2v14H6zM10.200 3h3v14h-3zM15 3h4v14h-4z" /></g>),
};

const WidgetIcon = ({ name }: { name: string }) => (
  <svg width="44" height="44" viewBox="0 0 22 22" overflow="visible">{widgetArt[name]}</svg>
);

/* ---------- taskbar icons, 48 unit grid ---------- */

const QtMark = ({ w, h, pencil }: { w: number; h: number; pencil?: boolean }) => (
  <svg width={w} height={h} viewBox="0 0 40 36" preserveAspectRatio="none" overflow="visible">
    <path d="M6 1h33v26l-7 8H1V8z" fill="#41cd52" />
    <text x="6" y="26" fontSize="25" fontFamily="Open Sans" fontWeight="600" fill="#fff" textLength="27" lengthAdjust="spacingAndGlyphs">Qt</text>
    {pencil && (<g><path d="M34 12l6 5-18 20-6 4 1-8z" fill="#f7c21c" stroke="#9a7d3a" strokeWidth="1" /><path d="M34 12l6 5-3 3.500-6-5z" fill="#f2a7a0" /><path d="M16 41l1-6 4 3.500z" fill="#e9dcc0" /></g>)}
  </svg>
);

const taskArt: Record<string, React.ReactNode> = {
  power: (<g><circle cx="24" cy="23" r="19" fill="#f3f8fb" /><circle cx="24" cy="23" r="17" fill="#35669a" /><path d="M18 15.500a10 10 0 1 0 12 0" fill="none" stroke="#fff" strokeWidth="3" /><path d="M24 11v13" stroke="#fff" strokeWidth="3.400" /></g>),
  copilot: (<g><path d="M12 2h17q4 0 5 4l1 6H27q-4 0-5 5l-3 12q-1 4-5 4H5q-6 0-5-7L6 7q2-5 6-5z" fill="url(#coA)" /><path d="M36 45H19q-4 0-5-4l-1-6h8q4 0 5-5l3-12q1-4 5-4h9q6 0 5 7l-6 19q-2 5-6 5z" fill="url(#coB)" /><path d="M29 2q4 0 5 4l1 6h-9z" fill="#0a3fa8" /></g>),
  folder: (<g><path d="M0 6q0-2 2-2h12q2 0 3 2l2 3h26q3 0 3 3v6H0z" fill="#dc9a0a" /><path d="M0 12h18l4-3h24q2 0 2 2v33q0 2-2 2H2q-2 0-2-2z" fill="url(#folder)" /><path d="M8 46V35q0-3 3-3h26q3 0 3 3v11z" fill="#0f6cbd" /><path d="M14 38.500h20" stroke="#0a4a8a" strokeWidth="2.500" /></g>),
  coccoc: (<g><path d="M24 0a24 24 0 1 0 23 24L48 0z" fill="#fff" /><path d="M24 3a21 21 0 1 0 21 21L30 20 45 14 30 17z" fill="url(#coc)" /><circle cx="23" cy="24" r="11.500" fill="#fff" /><circle cx="23" cy="24" r="8" fill="url(#coc)" /><circle cx="23" cy="24" r="4.500" fill="#fff" /><path d="M27 15 38 1h8L31 20z" fill="#fff" /><path d="M35 12 46 1v9z" fill="url(#coc)" /><path d="M26 12 25 3l5-1zM32 20l10-7 1 4z" fill="#ee5a33" /></g>),
  chrome: (<g><circle cx="24" cy="24" r="24" fill="#fbc116" /><path d="M24 24 3.200 12A24 24 0 0 1 44.800 12z" fill="#e33b2e" /><path d="M24 24 3.200 12A24 24 0 0 0 24 48l10-18z" fill="#229a4c" /><path d="M34.500 30 24 48A24 24 0 0 0 44.800 12H24z" fill="#fbc116" /><circle cx="24" cy="24" r="12" fill="#fff" /><circle cx="24" cy="24" r="9.500" fill="#3478f0" /><circle cx="42" cy="6" r="16" fill="#1fb7cd" stroke="#3a8f9a" /><path d="M46-4q-8 1-6 6 5 3 3 7l-5 4" stroke="#e87a80" strokeWidth="5" fill="none" /></g>),
  pycharm: (<g><path d="M0 2 2 0h26l6 6 9-1 2 22-25 10H0z" fill="#08c8f0" /><path d="M30 5 44 4 46 20 38 30z" fill="#10dc90" /><path d="M34 14l12 4 2 20-14 10H22z" fill="#f4ec20" /><path d="M5 34l16 4 20 2-16 7-18 1z" fill="#20dc88" /><rect x="9" y="9" width="30" height="30" fill="#000" /><text x="12" y="25" fontSize="16" fontFamily="Open Sans" fontWeight="700" fill="#fff" textLength="22">PC</text><path d="M13 34h12" stroke="#fff" strokeWidth="2.600" /></g>),
  messenger: (<g><path d="M24 0C10 0 0 10 0 23c0 8 3 13 8 17v8l9-4c2 .6 5 1 7 1 14 0 24-10 24-22S38 0 24 0z" fill="#0a6cff" /><path d="M9 30 19 16l8 7 12-7-10 14-8-7z" fill="#fff" /></g>),
  zalo: (<g><rect width="48" height="48" rx="14" fill="#0d5ce6" /><path d="M16 0h18q14 0 14 14v16q0 14-14 14H22q-7 0-11 1 0-2-1-4-5-5-5-11V12Q6 0 16 0z" fill="#fff" /><text x="10" y="28.500" fontSize="18" fontFamily="Lato" fontWeight="700" fill="#0d6cf2" textLength="33">Zalo</text></g>),
  music: (<g><rect width="48" height="48" rx="10" fill="url(#music)" /><path d="M17 34V12l18-4v23" fill="none" stroke="#fff" strokeWidth="3" /><path d="M17 12l18-4v6l-18 4z" fill="#fff" /><ellipse cx="14" cy="35" rx="4.800" ry="4" fill="#fff" /><ellipse cx="32" cy="32" rx="4.800" ry="4" fill="#fff" /></g>),
  duo: (<g><circle cx="24" cy="24" r="24" fill="#4ec604" /><path d="M7 10q10 2 17 6 7-4 17-6l-1 20q-6 6-16 6T8 30z" fill="#8ee000" /><rect x="7" y="16" width="14" height="18" rx="7" fill="#fff" /><rect x="28" y="16" width="14" height="18" rx="7" fill="#fff" /><ellipse cx="15" cy="24" rx="4" ry="5.500" fill="#3c4450" /><ellipse cx="34" cy="24" rx="4" ry="5.500" fill="#3c4450" /><path d="M20 29q4-4 9 0l-4.500 6.500z" fill="#f7901e" /></g>),
  outlook: (<g><path d="M13 3h32v20H13z" fill="#0e63b5" /><path d="M24 9h10v9H24z" fill="#1b8fe0" /><path d="M34 9h11v9H34z" fill="#45c3f7" /><path d="M13 18h21v9H13z" fill="#1478cc" /><path d="M34 18h11v9H34z" fill="#2c98e6" /><path d="M11 22l18 12 18-12v21q0 2-2 2H13q-2 0-2-2z" fill="#1f93e8" /><path d="M47 22 11 45h34q2 0 2-2z" fill="#3db8f5" /><rect y="12" width="24" height="24" rx="2" fill="#0b68bf" /><text x="5" y="31" fontSize="19" fontFamily="Open Sans" fontWeight="700" fill="#fff">O</text></g>),
  terminal: (<g><rect y="6" width="48" height="36" rx="2" fill="#3d3d3d" /><path d="M0 12V8q0-2 2-2h14v6z" fill="#c9c9c9" /><path d="M16 6h16v6H16z" fill="#969696" /><path d="M32 6h14q2 0 2 2v4H32z" fill="#666" /><path d="M7 18l9 9-9 9" fill="none" stroke="#d5d5d5" strokeWidth="4" /><rect x="23" y="32" width="16" height="5" fill="#fff" /></g>),
  vs: (<g><path d="M0 13 5 10l18 17 11-27 4 2v44l-4 2L15 27 5 38l-5-3z" fill="#7c51b4" /><path d="M5 16v17l8-9z" fill="#c9ebd4" /><path d="M34 0 48 7v34l-14 7z" fill="url(#vs)" /><path d="M0 13 5 10l29 31v7z" fill="#9a62d6" /><path d="M34 16v16l-9-8z" fill="#c9ebd4" /></g>),
  fpc: (<g><rect width="48" height="48" fill="#1268f0" /><path d="M0 0h18q6 12 0 20t-2 28H0z" fill="#d9a668" /><path d="M0 0h9q-3 8-7 9 5 7-2 14zM12 2q5 8 2 14M6 22q8 2 7 9l5 2-3 6H4z" fill="#4a3322" /><path d="M16 0q8 12 2 22 4 8-2 26h6q4-14 0-26 6-12 0-22z" fill="#dfe9f8" /><g fontFamily="Open Sans" fontWeight="600" fontSize="17" fill="#cfe4fb"><text x="22" y="15">F</text><text x="28" y="31">P</text><text x="32" y="46">C</text></g></g>),
  lapp: (<g><rect width="48" height="48" fill="#1e3fae" /><path d="M15 38 20 12v22l17 2z" fill="#0c2f62" /><path d="M17 10h6v20h13v5H17z" fill="#fff" /></g>),
  pie: (<g><circle cx="24" cy="24" r="24" fill="#fff" /><path d="M22 10v12.500H9Q10 11 22 10z" fill="#ff5cf0" /><path d="M25 22.500V10h12q0 11-12 12.500z" fill="#0a84ff" /><path d="M9 25.500h13V38Q10 37 9 25.500zM25 25.500q12 1.500 12 12.500H25z" fill="#27407c" /></g>),
  word: (<g><path d="M11 5q0-2 2-2h32q2 0 2 2v9H11z" fill="#41a5ee" /><path d="M11 14h36v10H11z" fill="#2b7cd3" /><path d="M11 24h36v11H11z" fill="#185abd" /><path d="M11 35h36v8q0 2-2 2H13q-2 0-2-2z" fill="#103f91" /><rect y="12" width="24" height="24" rx="2" fill="#1650a8" /><text x="3" y="31" fontSize="19" fontFamily="Open Sans" fontWeight="700" fill="#fff" textLength="18" lengthAdjust="spacingAndGlyphs">W</text></g>),
  drawio: (<g><rect width="48" height="48" rx="2" fill="#f08705" /><path d="M31 8 48 26v20q0 2-2 2H18L8 38l14-20z" fill="#df6c0c" /><path d="M24 14 13 32M24 14l11 18" stroke="#fff" strokeWidth="3" /><rect x="17" y="6" width="14" height="12" rx="2" fill="#fff" /><rect x="7" y="27" width="13" height="12" rx="2" fill="#fff" /><rect x="29" y="27" width="13" height="12" rx="2" fill="#fff" /></g>),
};

const TaskIcon = ({ name }: { name: string }) => (
  <svg width="48" height="48" viewBox="0 0 48 48" overflow="visible">{taskArt[name]}</svg>
);

const Doodle = () => (
  <svg width="98" height="50" viewBox="0 0 98 50">
    <path d="M6 40Q-4 30 3 22 2 12 14 10 22-1 34 3q10-6 18 0 14-5 20 3 12 0 14 10 12 6 11 16 2 6-8 10z" fill="url(#night)" />
    <circle cx="66" cy="18" r="14" fill="#e9a3c8" opacity=".7" /><circle cx="67" cy="19" r="12" fill="#ffe08a" />
    <path d="M2 40q20-6 46-3 30-4 47 2-4 3-6 5l-12 5H16l-6-4z" fill="#23452f" />
    <path d="M50 20q6-5 11-4l2-3 2 2.500L67 13l1 3.500Q73 9 82 8q-5 4-5 10-3-1-5 2l-3-1-2 7-3-4-4 2-2-4q-4-2-8 0z" fill="#45246b" />
    <path d="M22 42V18Q24 8 31 8t9 10l5 24q-6 3-9 0-4 4-8 1-3 2-6-1z" fill="#f4eefb" />
    <ellipse cx="28" cy="16" rx="1.800" ry="2.600" fill="#2b1b4a" /><ellipse cx="34" cy="16" rx="1.800" ry="2.600" fill="#2b1b4a" /><ellipse cx="31" cy="21" rx="1.500" ry="2" fill="#2b1b4a" />
    <ellipse cx="27" cy="36" rx="8.500" ry="7" fill="#f58a16" /><path d="M20 31q7-11 13 0" fill="none" stroke="#f7b25a" strokeWidth="1.500" /><path d="M23 34l2-2 1 2zM28 34l2-2 1 2zM22 37q5 4 10 0l-5 1z" fill="#4a2200" />
    <g fill="#fff"><circle cx="12" cy="16" r=".9" /><circle cx="9" cy="27" r=".9" /><circle cx="44" cy="9" r=".9" /><circle cx="17" cy="31" r=".8" /><circle cx="88" cy="22" r="1" /><circle cx="85" cy="33" r=".9" /><circle cx="47" cy="27" r=".9" /><circle cx="77" cy="36" r=".9" /></g>
  </svg>
);

/* ---------- data ---------- */

const menus: [string, number][] = [["File", 34], ["Edit", 38], ["Form", 53], ["View", 49], ["Settings", 83], ["Window", 85], ["Help", 50]];

const toolGroups = [
  ["new", "open", "save"],
  ["back", "front"],
  ["widgets", "signals", "buddies", "order"],
  ["horiz", "vert", "hsplit", "vsplit", "grid", "form", "broken", "adjust"],
];

const containers = [["toolbox", "Tool Box"], ["tab", "Tab Widget"], ["stacked", "Stacked Widget"], ["frame", "Frame"], ["widget", "Widget"], ["mdi", "MDI Area"], ["dock", "Dock Widget"]];
const inputs = [
  ["combo", "Combo Box"], ["fontcombo", "Font Combo Box"], ["line", "Line Edit"], ["text", "Text Edit"], ["plain", "Plain Text Edit"], ["spin", "Spin Box"],
  ["dspin", "Double Spin Box"], ["time", "Time Edit"], ["date", "Date Edit"], ["datetime", "Date/Time Edit"], ["dial", "Dial"], ["hscroll", "Horizontal Scroll Bar"],
  ["vscroll", "Vertical Scroll Bar"], ["hslider", "Horizontal Slider"], ["vslider", "Vertical Slider"], ["line", "Key Sequence Edit"],
];
const displays = [
  ["label", "Label"], ["text", "Text Browser"], ["graphics", "Graphics View"], ["calendar", "Calendar Widget"], ["lcd", "LCD Number"],
  ["progress", "Progress Bar"], ["hline", "Horizontal Line"], ["vline", "Vertical Line"], ["widget", "OpenGL Widget"],
];

const objects = [["label", "QLabel"], ["la..._2", "QLabel"], ["l...a", "QLineEdit"], ["p...o", "QPushButton"]];

type Prop = { name: string; value: string; open?: boolean; closed?: boolean; nested?: boolean; bold?: boolean; dim?: boolean; kind?: "check" | "font" };
const props: Prop[] = [
  { name: "enabled", value: "", kind: "check" },
  { name: "geometry", value: "[(0, 0), 728 x 615]", open: true, bold: true },
  { name: "X", value: "0", nested: true, dim: true },
  { name: "Y", value: "0", nested: true, dim: true },
  { name: "Width", value: "728", nested: true },
  { name: "Height", value: "615", nested: true },
  { name: "sizePolicy", value: "[Preferred, Preferred, 0, 0]", closed: true },
  { name: "minimumSize", value: "0 x 0", closed: true },
  { name: "maximumSize", value: "16777215 x 16777215", closed: true },
  { name: "sizeIncrement", value: "0 x 0", closed: true },
  { name: "baseSize", value: "0 x 0", closed: true },
  { name: "palette", value: "Inherited" },
  { name: "font", value: "[MS Shell Dlg 2, 8]", open: true, kind: "font" },
  { name: "Family", value: "MS Shell Dlg 2", nested: true },
];

const pinned = ["power", "copilot", "folder", "coccoc", "chrome", "pycharm", "messenger", "zalo", "music", "duo", "outlook", "terminal", "vs", "fpc", "lapp", "pie", "word", "drawio"];
const running = new Set(["copilot", "chrome", "music"]);

const Rows = ({ items }: { items: string[][] }) => (
  <>
    {items.map(([icon, name]) => (
      <WidgetRow key={name}><WidgetIcon name={icon} /><WidgetName>{name}</WidgetName></WidgetRow>
    ))}
  </>
);

const Section = ({ name }: { name: string }) => (
  <Category><Chevron open /><CategoryName>{name}</CategoryName></Category>
);

/* ---------- panels ---------- */

const WidgetBox = () => (
  <LeftDock>
    <Dock name="Widget Box" />
    <LeftFilterWrap><FilterField $w={556}>Filter</FilterField></LeftFilterWrap>
    <WidgetFrame>
      <WidgetList>
        <Rows items={containers} />
        <Section name="Input Widgets" />
        <Rows items={inputs} />
        <Section name="Display Widgets" />
        <Rows items={displays} />
      </WidgetList>
      <ScrollTrack><Thumb $top={706} $h={872} /></ScrollTrack>
    </WidgetFrame>
  </LeftDock>
);

const FormEditor = () => (
  <MdiArea>
    <FormWindow>
      <FormInner>
        <FormTitle>
          <GlyphSlot><QtMark w={31} h={24} /></GlyphSlot>
          <FormCaption>Form - giaodien.ui*</FormCaption>
          <WinButton>
            <svg width="24" height="12" viewBox="0 0 24 12"><rect x="1.500" y="2" width="21" height="8" rx="1" fill="#e8e8e8" stroke="#5a6b80" strokeWidth="1.600" /></svg>
          </WinButton>
          <WinButton $close>
            <svg width="24" height="20" viewBox="0 0 24 20"><path d="M4 3l16 14M20 3 4 17" stroke="#54404a" strokeWidth="7" /><path d="M4 3l16 14M20 3 4 17" stroke="#f4f4f4" strokeWidth="4.400" /></svg>
          </WinButton>
        </FormTitle>
        <FormCanvas>
          <Heading $x={339} $y={61} $w={760} $h={120}>Chương trình gieo xúc xắc</Heading>
          <PushButton $x={581} $y={461} $w={240} $h={80}>Gieo xúc xắc</PushButton>
          <FormLabel $x={259} $y={803} $w={420} $h={60}>Kết quả gieo ngẫu nhiên là:</FormLabel>
          <LineEdit $x={720} $y={800} $w={342} $h={82} />
        </FormCanvas>
      </FormInner>
    </FormWindow>
  </MdiArea>
);

const ObjectInspector = () => (
  <>
    <Dock name="Object Inspector" />
    <TreeFrame $h={302} $mt={5}>
      <TreeBody>
        <TreeHeader $h={49} $pt={5}>
          <HeaderCell $w={153} $pt={5}>Object</HeaderCell>
          <HeaderCell $pt={5}>Class</HeaderCell>
        </TreeHeader>
        <ObjectRow $root>
          <ExpandCell><Chevron open /></ExpandCell>
          <ObjectName $root>
            <svg width="32" height="32" viewBox="0 0 24 24">
              <g fill="#62b4ee" stroke="#3a5f86" strokeWidth="1"><rect x="1" y="1" width="9" height="5" /><rect x="11" y="1" width="9" height="5" /><rect x="1" y="8.500" width="7" height="5" /><rect x="10" y="8.500" width="9" height="5" /><rect x="1" y="15.500" width="9" height="5" /></g>
              <circle cx="17" cy="16.500" r="6" fill="#5c7ba6" stroke="#8c3a52" strokeWidth="2.400" /><path d="M13 21l8-9" stroke="#8c3a52" strokeWidth="2.400" />
            </svg>
            Form
          </ObjectName>
          <ClassName $root>QWidget</ClassName>
        </ObjectRow>
        {objects.map(([name, cls], i) => (
          <ObjectRow key={name} $alt={i % 2 === 0}>
            <span />
            <ObjectName>{name}</ObjectName>
            <ClassName>{cls}</ClassName>
          </ObjectRow>
        ))}
      </TreeBody>
      <ArrowTrack>
        <svg width="12" height="10" viewBox="0 0 12 10"><path d="M6 0l6 10H0z" fill="#a2a2a2" /></svg>
        <svg width="12" height="10" viewBox="0 0 12 10"><path d="M6 10l6-10H0z" fill="#a2a2a2" /></svg>
      </ArrowTrack>
    </TreeFrame>
  </>
);

const DropMark = () => <path d="M40 40h9l-4.500 5.500z" fill="#000" />;

const PropertyEditor = () => (
  <>
    <Dock name="Property Editor" mt={9} />
    <PropTools>
      <FilterField $w={498}>Filter</FilterField>
      <PropTool $w={62}>
        <svg width="48" height="48" viewBox="0 0 48 48" overflow="visible"><path d="M18 3h11v15h15v11H29v15H18V29H3V18h15z" fill="url(#plus)" stroke="#0c9a0c" strokeWidth="2" /><DropMark /></svg>
      </PropTool>
      <PropTool $w={62}>
        <svg width="48" height="48" viewBox="0 0 48 48"><rect x="3" y="19" width="42" height="10" fill="url(#pale)" stroke="#a5a5a5" strokeWidth="2" /></svg>
      </PropTool>
      <PropTool $w={60}>
        <svg width="48" height="48" viewBox="0 0 48 48" overflow="visible"><path d="M5 43 33 13" stroke="#8f8f8f" strokeWidth="9" strokeLinecap="round" /><path d="M6 42 33 13" stroke="#e6e6e6" strokeWidth="6" strokeLinecap="round" /><path d="M11 36 27 19" stroke="#3b3b3b" strokeWidth="2.500" /><circle cx="5.500" cy="42.500" r="2" fill="#555" /><path d="M27 12Q26 3 36 0l2 2-4 6 5 4 6-3 2 3q-3 9-12 7z" fill="#dedede" stroke="#999" /><DropMark /></svg>
      </PropTool>
    </PropTools>
    <ClassBox>Form : QWidget</ClassBox>
    <TreeFrame $h={715} $mt={2}>
      <TreeBody>
        <TreeHeader $h={49} $pt={5}>
          <HeaderCell $w={301} $pt={5}>Property</HeaderCell>
          <HeaderCell $pt={5}>Value</HeaderCell>
        </TreeHeader>
        <GroupRow><ExpandCell><Chevron open /></ExpandCell><GroupName>QObject</GroupName></GroupRow>
        <PropRow $tone="plain">
          <PropExpand $peach />
          <PropName $bold>objectName</PropName>
          <PropValue>Form</PropValue>
        </PropRow>
        <GroupRow><ExpandCell><Chevron open /></ExpandCell><GroupName>QWidget</GroupName></GroupRow>
        {props.map((p, i) => (
          <PropRow key={p.name} $tone={i % 2 ? "deep" : "light"} $dim={p.dim}>
            <PropExpand>{p.open ? <Chevron open /> : p.closed ? <Chevron color="#888" /> : null}</PropExpand>
            <PropName $nested={p.nested} $bold={p.bold}>{p.name}</PropName>
            <PropValue>
              {p.kind === "check" && (
                <CheckBox><svg width="14" height="12" viewBox="0 0 14 12" fill="none" stroke="#fff" strokeWidth="1.700"><path d="M1 6l4 4 8-8" /></svg></CheckBox>
              )}
              {p.kind === "font" && <FontGlyph>A</FontGlyph>}
              {p.value}
            </PropValue>
          </PropRow>
        ))}
      </TreeBody>
      <ScrollTrack><Thumb $top={36} $h={222} /></ScrollTrack>
    </TreeFrame>
  </>
);

const ResourceBrowser = () => (
  <>
    <Dock name="Resource Browser" mt={9} />
    <ResourceTools>
      <ToolPair>
        <svg width="44" height="44" viewBox="0 0 44 44"><path d="M2 42 5 31 34 4l7 6L12 38z" fill="#f5b22c" stroke="#a8731a" strokeWidth="1.500" /><path d="M9 32 35 7" stroke="#ffe08a" strokeWidth="2.500" /><path d="M34 4q4-5 8-1t-1 8z" fill="#c9683a" /><path d="M31 7l3-3 7 6-3 3.500z" fill="#d7d7dc" /><path d="M5 31l7 7-10 4z" fill="#efd9a8" /><path d="M2 42l1-4 3 3z" fill="#555" /></svg>
        <svg width="44" height="44" viewBox="0 0 44 44"><path d="M35 29a15 14.500 0 1 1-3-17" fill="none" stroke="url(#refresh)" strokeWidth="10" /><path d="M42 2v18H24z" fill="#2f8f35" /></svg>
      </ToolPair>
      <FilterField $w={282}>Filter</FilterField>
    </ResourceTools>
    <ResourcePanes>
      <ResourcePane $w={342}>&lt;resource root&gt;</ResourcePane>
      <ResourcePane />
    </ResourcePanes>
    <TabStrip>
      <DockTab $w={212}>Signal/Slot Editor</DockTab>
      <DockTab $w={168}>Action Editor</DockTab>
      <DockTab $w={228} $on>Resource Browser</DockTab>
    </TabStrip>
  </>
);

const SystemTray = () => (
  <Tray>
    <TrayItem $ml={0}><svg width="22" height="14" viewBox="0 0 22 14" fill="none" stroke="#1a1f1c" strokeWidth="2.400"><path d="M1 12.500 11 2l10 10.500" /></svg></TrayItem>
    <TrayItem $ml={37}><svg width="32" height="22" viewBox="0 0 32 22"><path d="M8 21a8 7.500 0 0 1 0-14.500A9 8 0 0 1 23 6a7.600 7.600 0 0 1 2 15z" fill="#59645d" /><path d="M12 21 22 7a8 8 0 0 1 3 14z" fill="#7a867e" /><path d="M8 7q3 2-1 9" stroke="#39423c" fill="none" strokeWidth="3" /></svg></TrayItem>
    <Language>VIE</Language>
    <TrayItem $ml={44}><svg width="32" height="24" viewBox="0 0 32 24" fill="none" stroke="#1a1f1c" strokeWidth="2"><path d="M1 9.500a21.500 21.500 0 0 1 30 0M6 14.500a14.500 14.500 0 0 1 20 0M11 19a7.500 7.500 0 0 1 10 0" /><circle cx="16" cy="21" r="2.400" fill="#1a1f1c" stroke="none" /></svg></TrayItem>
    <TrayItem $ml={16}><svg width="32" height="28" viewBox="0 0 32 28" fill="none" stroke="#1a1f1c" strokeWidth="2"><path d="M1 10h6l7-7v22l-7-7H1z" strokeLinejoin="round" /><path d="M18 10q3 4 0 8M22 6q6 8 0 16M26 2q9 12 0 24" /></svg></TrayItem>
    <TrayItem $ml={16}><svg width="32" height="32" viewBox="0 0 32 32"><path d="M13 7h10q4 0 4 4v7M27 12.500h4v6M2 15v8q0 4 4 4h11" fill="none" stroke="#1a1f1c" strokeWidth="2.200" /><path d="M13 10.500h8q2.500 0 2.500 2.500v3l-5 7H7q-2 0-1.500-2z" fill="#1a1f1c" /><path d="M6 0 1 9h3l-1 7 7-9H6z" fill="#1a1f1c" /><path d="M25 31q-7-5-7-8.500t3.500-3.500q2.500 0 3.500 2.500 1-2.500 3.500-2.500t3.500 3.500-7 8.500z" fill="#1a1f1c" /></svg></TrayItem>
    <Clock><div>10:43 AM</div><div>10/31/2025</div></Clock>
    <TrayItem $ml={18}><svg width="27" height="32" viewBox="0 0 27 32"><path d="M1 25q3-2 3-7v-6Q4 3 13 2l8 3v13q0 5 3 7z" fill="#1a1f1c" /><path d="M8 28h9q-4 5-9 0z" fill="#1a1f1c" /><path d="M18 2h7l-6 8h7" fill="none" stroke="#c9ebd4" strokeWidth="5" /><path d="M18 2h7l-6 8h7" fill="none" stroke="#1a1f1c" strokeWidth="2" /><path d="M9 12h7l-6 8h7" fill="none" stroke="#e8f5ec" strokeWidth="2.200" /></svg></TrayItem>
  </Tray>
);

export default function App() {
  return (
    <Desktop>
      <GlobalStyle />
      <Defs />
      <TitleBar>
        <QtMark w={26} h={22} pencil />
        <AppTitle>Qt Designer</AppTitle>
        <CaptionButton><svg width="22" height="4"><path d="M0 2h22" stroke="#111" strokeWidth="2" /></svg></CaptionButton>
        <CaptionButton><svg width="22" height="22" fill="none" stroke="#111" strokeWidth="2"><rect x="1.500" y="5" width="15" height="15" rx="3" /><path d="M6 2h10q4 0 4 4v10" /></svg></CaptionButton>
        <CaptionButton><svg width="22" height="22" stroke="#111" strokeWidth="2"><path d="M1 1l20 20M21 1 1 21" /></svg></CaptionButton>
      </TitleBar>
      <MenuBar>{menus.map(([m, w]) => <MenuItem key={m} $w={w}>{m}</MenuItem>)}</MenuBar>
      <ToolbarRow>
        {toolGroups.map((group, g) => (
          <ToolGroup key={g} $last={g === 3}>
            <Grip />
            {group.map((name) => <ToolButton key={name} $active={name === "widgets"}><ToolIcon name={name} /></ToolButton>)}
          </ToolGroup>
        ))}
      </ToolbarRow>
      <Workspace>
        <WidgetBox />
        <FormEditor />
        <RightDock>
          <ObjectInspector />
          <PropertyEditor />
          <ResourceBrowser />
        </RightDock>
      </Workspace>
      <Taskbar>
        <svg width="46" height="46" viewBox="0 0 46 46" fill="url(#win)"><rect width="22" height="22" rx="1.500" /><rect x="24" width="22" height="22" rx="1.500" /><rect y="24" width="22" height="22" rx="1.500" /><rect x="24" y="24" width="22" height="22" rx="1.500" /></svg>
        <SearchPill>
          <svg width="30" height="32" viewBox="0 0 30 32" fill="none" stroke="#222" strokeWidth="3"><circle cx="12.500" cy="13" r="10.500" /><path d="M19.500 21 28 30" strokeWidth="4" /></svg>
          <SearchText>Search</SearchText>
          <Doodle />
        </SearchPill>
        <Pinned>
          {pinned.map((name) => (
            <TaskSlot key={name}><TaskTile><TaskIcon name={name} />{running.has(name) && <RunMark />}</TaskTile></TaskSlot>
          ))}
          <TaskSlot><TaskTile $active><QtMark w={38} h={30} pencil /><RunMark $wide /></TaskTile></TaskSlot>
        </Pinned>
        <SystemTray />
      </Taskbar>
    </Desktop>
  );
}
